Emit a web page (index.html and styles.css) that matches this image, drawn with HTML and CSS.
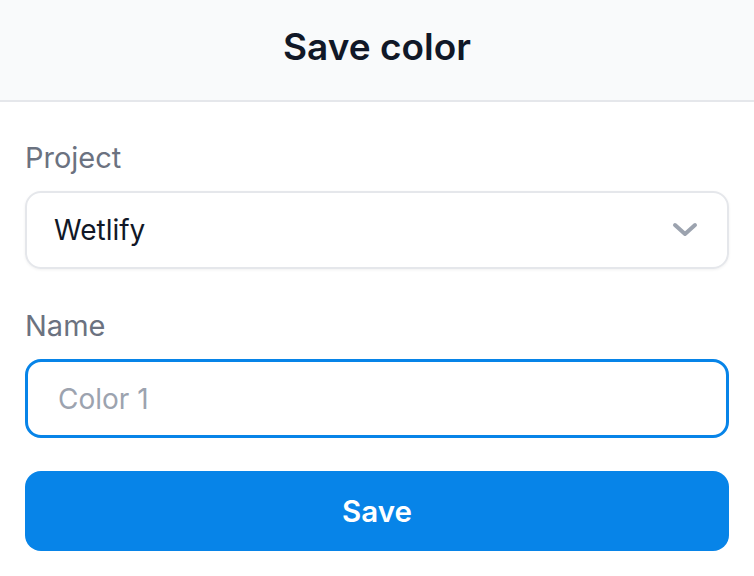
FILE: index.html
```html
<!DOCTYPE html>
<html lang="en">
<head>
<meta charset="utf-8">
<title>Save color</title>
<link rel="stylesheet" href="styles.css">
</head>
<body>
<div class="dialog">
  <header class="header">
    <h1 class="title">Save color</h1>
  </header>
  <form class="form">
    <label class="label" for="project">Project</label>
    <div class="select" id="project">
      <span class="select-value">Wetlify</span>
      <svg class="chevron" width="26" height="16" viewBox="0 0 26 16" aria-hidden="true">
        <path d="M3 3 L13 12 L23 3" fill="none" stroke="#9ca3af" stroke-width="4" stroke-linecap="round" stroke-linejoin="round"/>
      </svg>
    </div>
    <label class="label label-name" for="name">Name</label>
    <input class="input" id="name" type="text" placeholder="Color 1">
    <button class="button" type="button">Save</button>
  </form>
</div>
</body>
</html>
```

FILE: styles.css
```css
* { box-sizing: border-box; }
html, body { margin: 0; padding: 0; background: #ffffff; }
body {
  font-family: Inter, "Open Sans", "DejaVu Sans", sans-serif;
  width: 754px;
}
.header {
  height: 102px;
  padding-bottom: 8px;
  background: #f9fafb;
  border-bottom: 2px solid #e5e7eb;
  display: flex;
  align-items: center;
  justify-content: center;
}
.title {
  margin: 0;
  font-size: 37px;
  font-weight: 600;
  color: #111827;
}
.form {
  display: flex;
  flex-direction: column;
  padding: 38px 25px 0 25px;
}
.label {
  font-size: 29px;
  line-height: 35px;
  color: #6b7280;
  margin-bottom: 16px;
}
.label-name { margin-top: 39px; }
.select {
  height: 78px;
  border: 2px solid #e5e7eb;
  border-radius: 16px;
  box-shadow: 0 1px 3px rgba(0,0,0,0.06);
  display: flex;
  align-items: center;
  justify-content: space-between;
  padding: 0 29px 0 27px;
}
.select-value {
  font-size: 28px;
  color: #111827;
}
.chevron { display: block; }
.input {
  height: 79px;
  border: 3px solid #0784e8;
  border-radius: 16px;
  padding: 0 30px;
  font-family: inherit;
  font-size: 28px;
  color: #111827;
  outline: none;
}
.input::placeholder { color: #9ca3af; }
.button {
  margin-top: 33px;
  height: 80px;
  border: none;
  border-radius: 16px;
  background: #0784e8;
  color: #ffffff;
  font-family: inherit;
  font-size: 29.5px;
  font-weight: 600;
}
```
